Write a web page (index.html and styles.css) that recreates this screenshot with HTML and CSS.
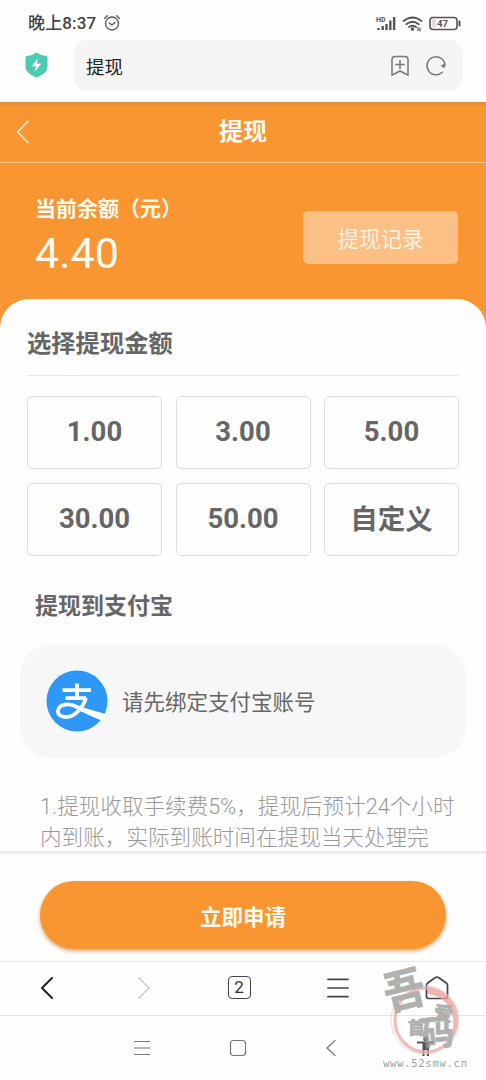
FILE: index.html
```html
<!DOCTYPE html>
<html lang="zh-CN">
<head>
<meta charset="utf-8">
<title>提现</title>
<link rel="stylesheet" href="styles.css">
</head>
<body>
<div class="phone">
  <div class="status">
    <span class="time">晚上8:37</span>
    <svg class="alarm" width="18" height="18" viewBox="0 0 18 18"><circle cx="9" cy="9.5" r="6.5"/><path d="M1.5 4.5L4.3 1.7M13.7 1.7L16.5 4.5M6.3 9L9 11L11.8 8.6"/></svg>
    <svg class="signals" width="86" height="20" viewBox="0 0 86 20">
      <text class="hd" x="0" y="8.500">HD</text>
      <path class="bars" d="M2.500 17v-2M6.700 17v-4M10.500 17v-6M14.300 17v-9.500M18.100 17V4"/>
      <g class="wifi"><path d="M27.500 8Q36.500 .8 45.500 8M30.300 11.200Q36.500 6.200 42.700 11.200M33 14Q36.500 11.400 40 14"/><circle cx="36.500" cy="16" r=".9"/><path class="tiny" d="M42 14.500v3M44 15v3"/></g>
      <rect class="cell" x="54" y="4.500" width="27" height="12" rx="3"/>
      <path class="charge" d="M56 6.500h4v8h-4z"/>
      <path class="nub" d="M83.500 8.500v4"/>
      <text class="level" x="61" y="14">47</text>
    </svg>
  </div>
  <div class="browser">
    <svg class="shield" width="23" height="26" viewBox="0 0 23 26"><path class="shield-bg" d="M11.500 .5Q15.500 3.500 21 3.900Q22.500 4 22.500 5.500V15Q22.500 21 11.500 25.500Q.5 21 .5 15V5.500Q.5 4 2 3.900Q7.500 3.500 11.500 .5z"/><path class="bolt" d="M12.500 6.500L6.800 14.200H11L9.700 20L16.200 11.700H12z"/></svg>
    <div class="address">
      <span>提现</span>
      <svg class="line-icon" width="20" height="22" viewBox="0 0 20 22"><path d="M5 1.500h10q3 0 3 3v15.700l-8-4.200-8 4.200V4.500q0-3 3-3zM10 5.500v8M6 9.500h8"/></svg>
      <svg class="line-icon reload" width="22" height="22" viewBox="0 0 22 22"><path d="M17.300 17.200A9 9 0 1 1 20 10.500"/><path class="arrow" d="M15.500 10.500l3.900 3 .8-5z"/></svg>
    </div>
  </div>
  <header class="titlebar">
    <svg class="back" width="14" height="24" viewBox="0 0 14 24"><path d="M12.500 1L1.500 12L12.500 23"/></svg>
    <h1>提现</h1>
  </header>
  <section class="balance">
    <div>
      <div class="balance-label">当前余额（元）</div>
      <div class="balance-value">4.40</div>
    </div>
    <button class="records">提现记录</button>
  </section>
  <div class="sheet-wrap">
    <main class="sheet">
      <h2 class="amount-title">选择提现金额</h2>
      <div class="amounts">
        <div class="amount">1.00</div><div class="amount">3.00</div><div class="amount">5.00</div>
        <div class="amount">30.00</div><div class="amount">50.00</div><div class="amount custom">自定义</div>
      </div>
      <h2 class="payee-title">提现到支付宝</h2>
      <div class="account">
        <svg class="alipay" width="62" height="62" viewBox="0 0 62 62">
          <circle cx="31" cy="31" r="30.500"/>
          <path class="cross" d="M16.500 20.200H45M31 13.500v13.500M19.500 28.200H40"/>
          <path class="sweep" d="M40 28C37.500 36 30 47 20 47C14 47 11.500 44 12 40.500C13 34 23 32.500 31 37C40 41.500 48 46 57.500 48.800"/>
          <path class="tail" d="M37 37.500L59.500 44L56 50.700L34 40.700z"/>
        </svg>
        <span>请先绑定支付宝账号</span>
      </div>
      <p class="notes">1.提现收取手续费5%，提现后预计24个小时<br>内到账，实际到账时间在提现当天处理完</p>
    </main>
  </div>
  <div class="submit"><button class="apply">立即申请</button></div>
  <nav class="toolbar">
    <svg class="nav-back" width="14" height="24" viewBox="0 0 14 24"><path d="M12 2L2 12L12 22"/></svg>
    <svg class="nav-next" width="14" height="24" viewBox="0 0 14 24"><path d="M2 2L12 12L2 22"/></svg>
    <span class="tabs">2</span>
    <svg width="22" height="24" viewBox="0 0 22 24"><path d="M1 3.300h20M1 12h20M1 20.700h20"/></svg>
    <svg class="home" width="24" height="24" viewBox="0 0 24 24"><path d="M10.500 1.500q1.500-1 3 0L21 6.800q1.500 1 1.500 2.500v11q0 2.200-2.200 2.200H3.700q-2.200 0-2.200-2.200v-11q0-1.500 1.500-2.500z"/></svg>
  </nav>
  <div class="system">
    <svg width="16" height="16" viewBox="0 0 16 16"><path d="M.5 1.500h15M.5 8h15M.5 14.500h15"/></svg>
    <svg width="18" height="18" viewBox="0 0 18 18"><rect x="1.500" y="1.500" width="15" height="15" rx="3"/></svg>
    <svg width="12" height="18" viewBox="0 0 12 18"><path d="M10 1.500L2 9L10 16.500"/></svg>
    <svg class="person" width="20" height="21" viewBox="0 0 20 21"><circle cx="9.500" cy="3" r="2.300"/><path d="M1 5.500h17v2h-5V20h-2.200v-6H8.600v6H6.400V7.500H1z"/></svg>
  </div>
  <div class="watermark">
    <svg width="116" height="120" viewBox="0 0 116 120">
      <g class="ring"><ellipse cx="56" cy="60" rx="31" ry="32"/><ellipse class="fine" cx="55" cy="60" rx="34" ry="34"/><path d="M58 29C87 27 94 69 77 83C90 64 83 37 58 34z"/></g>
      <text class="ink wu" transform="translate(18 51) rotate(-14) scale(.92 1)">吾</text>
      <text class="ink ai" transform="translate(63 59) rotate(8)">爱</text>
      <text class="ink shou" x="38" y="74">首</text>
      <text class="ink ma" transform="translate(53 87) rotate(-6) scale(1 1.100)">码</text>
      <text class="url" x="13" y="107" textLength="84">www.52smw.cn</text>
    </svg>
  </div>
</div>
</body>
</html>
```
FILE: styles.css
```css
* { box-sizing: border-box; }
body { margin: 0; background: #fff; font-family: Roboto, "Noto Sans CJK SC", sans-serif; color: #666; }
h1, h2, p { margin: 0; }
button { border: 0; padding: 0; font-family: inherit; }
svg { display: block; flex: none; }
.phone { position: relative; width: 486px; height: 1080px; overflow: hidden; display: flex; flex-direction: column; background: #fefefe; }
.phone > * { flex: none; }

.status { height: 40px; display: flex; align-items: center; padding: 6px 24px 0 28px; }
.time { font-size: 17px; font-weight: 500; line-height: 24px; color: #444; letter-spacing: .15px; white-space: nowrap; }
.alarm { margin-left: 7px; fill: none; stroke: #555; stroke-width: 1.3; stroke-linecap: round; }
.signals { margin-left: auto; fill: none; stroke: #555; }
.hd { font: bold 7px Roboto, sans-serif; fill: #555; stroke: none; }
.bars { stroke-width: 2.4; }
.wifi { stroke-width: 1.9; stroke-linecap: round; }
.wifi circle { fill: #555; }
.tiny { stroke-width: 1.2; }
.cell { stroke-width: 1.6; }
.charge { fill: #ddd; stroke: none; }
.nub { stroke-width: 2; stroke-linecap: round; }
.level { font: bold 9.5px Roboto, sans-serif; fill: #555; stroke: none; }

.browser { height: 62px; display: flex; align-items: flex-start; padding-left: 25px; background: #fefefe; }
.shield { margin-top: 12px; }
.shield-bg { fill: #4bccb2; }
.bolt { fill: #fff; }
.address { width: 389px; height: 51px; margin-left: 26px; padding: 0 16px 0 12px; border-radius: 14px; background: #f5f5f5; display: flex; align-items: center; color: #222; font-size: 18.5px; }
.address span { margin-right: auto; }
.line-icon { fill: none; stroke: #777; stroke-width: 1.5; stroke-linecap: round; stroke-linejoin: round; }
.reload { margin-left: 15px; }
.arrow { fill: #777; stroke: none; }

.titlebar { height: 61px; display: grid; grid-template-columns: 60px 1fr 60px; align-items: center; background: linear-gradient(#df8a36, #fa9632 6px); border-bottom: 1px solid #fcc48a; }
.back { margin-left: 16px; fill: none; stroke: #fff0d8; stroke-width: 1.5; }
.titlebar h1 { font-size: 24px; line-height: 36px; font-weight: 700; text-align: center; color: #fffaf0; }
.balance { height: 136px; padding: 0 28px 0 35px; display: flex; justify-content: space-between; align-items: flex-start; background: #fa9632; color: #fffaf0; }
.balance-label { margin-top: 30px; font-size: 21px; line-height: 32px; font-weight: 700; }
.balance-value { font-size: 43px; line-height: 50px; margin-top: 3px; }
.records { margin-top: 48px; width: 155px; height: 53px; border-radius: 5px; background: #fbc086; color: #fff2e0; font-size: 21.5px; }

.sheet-wrap { height: 552px; overflow: hidden; background: linear-gradient(#fa9632 60px, #fefefe 60px); }
.sheet { height: 553px; padding: 0 27px; border-radius: 29px 29px 0 0; background: #fefefe; }
.amount-title { height: 77px; padding-top: 27px; border-bottom: 1px solid #e8e8e8; font-size: 24.3px; line-height: 36px; }
.amounts { margin-top: 20px; display: grid; grid-template-columns: repeat(3, 135px); grid-auto-rows: 73px; gap: 13.500px; }
.amount { border: 1px solid #ddd; border-radius: 5px; display: flex; align-items: center; justify-content: center; padding-bottom: 2px; font-size: 27.5px; font-weight: 700; }
.custom { padding-bottom: 4px; }
.payee-title { margin: 34px 0 0 8px; font-size: 23px; line-height: 34px; }
.account { width: 446px; height: 114px; margin: 20px 0 0 -7px; padding-left: 26px; border-radius: 32px; background: #f7f7f7; display: flex; align-items: center; gap: 14px; font-size: 21.5px; }
.alipay circle { fill: #2d98f5; }
.cross, .sweep { fill: none; stroke: #fff; stroke-width: 3.8; }
.tail { fill: #fff; }
.notes { margin: 33px 0 0 13px; font-size: 21.6px; line-height: 31px; color: #999; font-weight: 300; white-space: nowrap; }

.submit { height: 110px; padding: 27px 40px 0; border-top: 3px solid #eee; background: #fefefe; }
.apply { display: block; width: 406px; height: 68px; border-radius: 34px; background: #fa9632; color: #fffaf0; font-size: 21.5px; font-weight: 700; box-shadow: 0 2px 4px #d5a574; }
.toolbar { height: 55px; padding: 0 37px 2px 40px; border-top: 1px solid #e5e5e5; border-bottom: 1px solid #e5e5e5; display: flex; align-items: center; justify-content: space-between; }
.toolbar svg { fill: none; stroke: #444; stroke-width: 1.7; stroke-linecap: round; stroke-linejoin: round; }
.toolbar .nav-back { stroke: #222; stroke-width: 2; }
.toolbar .nav-next { stroke: #ccc; margin-left: 7px; }
.tabs { width: 23px; height: 23px; border: 1.500px solid #444; border-radius: 4px; text-align: center; font-size: 17px; line-height: 21px; color: #333; }
.system { height: 64px; padding: 0 50px 0 134px; display: flex; align-items: center; justify-content: space-between; }
.system svg { fill: none; stroke: #777; stroke-width: 1.2; stroke-linecap: round; stroke-linejoin: round; }
.system .person { fill: #555; stroke: none; margin-top: -3px; }

.watermark { position: absolute; left: 370px; top: 960px; opacity: .78; }
.ring { fill: none; stroke: #ecaaa7; stroke-width: 3; }
.ring .fine { stroke: #f3cac6; stroke-width: 1; }
.ring path { fill: #ec9e9b; stroke: none; }
.ink { fill: #9b9b98; stroke: #9b9b98; stroke-width: .8; font-family: "Noto Sans CJK SC", sans-serif; font-weight: 700; }
.wu { font-size: 45px; }
.ai { font-size: 19px; }
.shou { font-size: 17px; }
.ma { font-size: 32px; }
.url { font: 10.5px "DejaVu Sans Mono", monospace; fill: #888; }
```
